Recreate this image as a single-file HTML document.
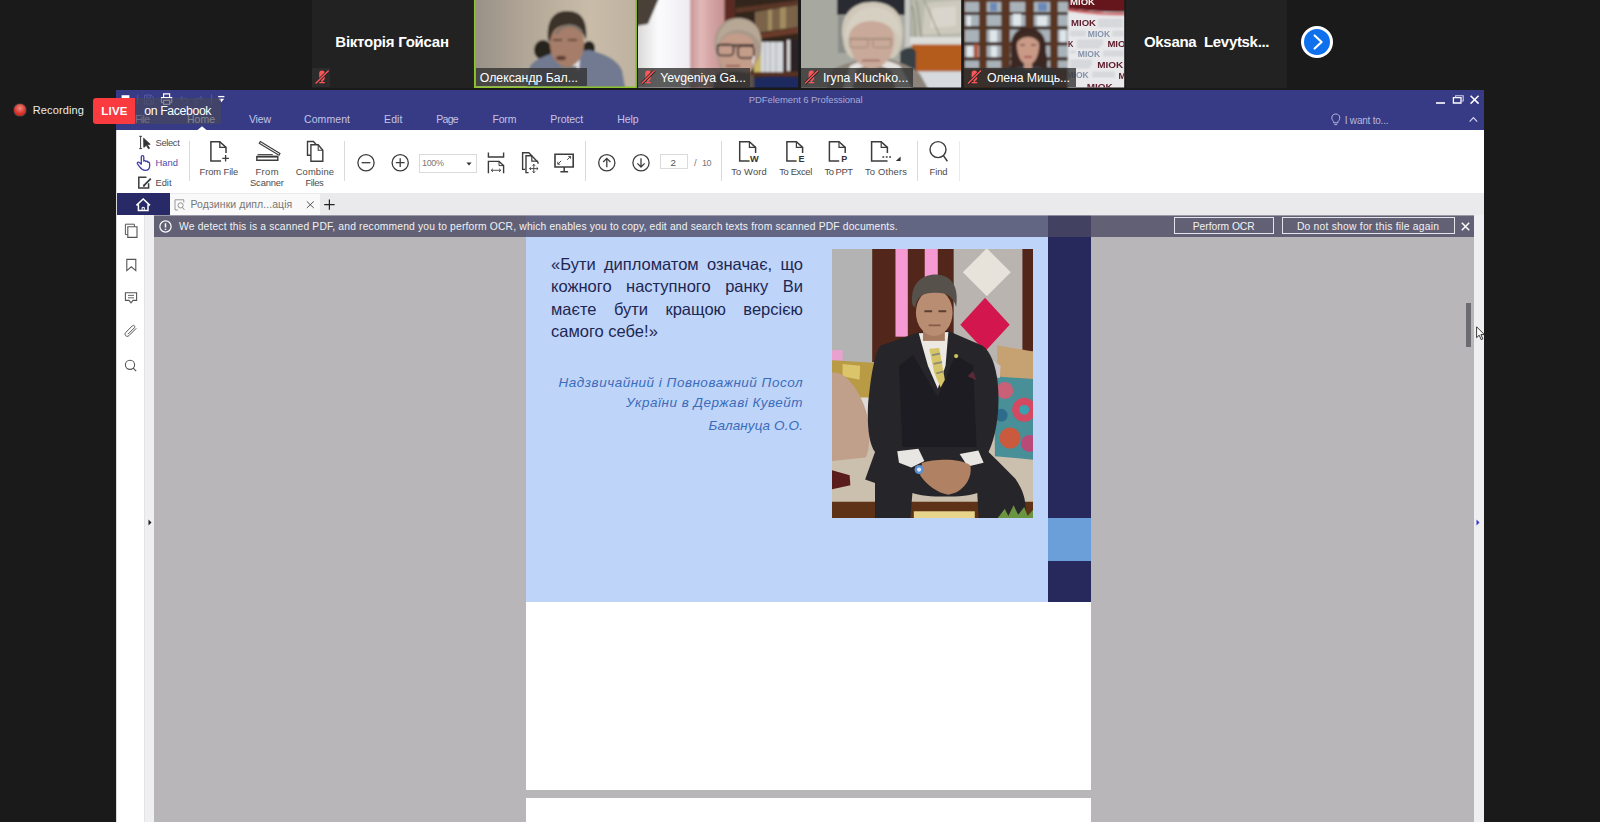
<!DOCTYPE html>
<html><head><meta charset="utf-8">
<style>
*{margin:0;padding:0;box-sizing:border-box}
html,body{width:1600px;height:822px;overflow:hidden;background:#1a1a1a;font-family:"Liberation Sans",sans-serif}
#stage{position:relative;width:1600px;height:822px;overflow:hidden;background:#1a1a1a}
.a{position:absolute}
.tx{position:absolute;white-space:nowrap;line-height:normal}
svg{position:absolute;overflow:visible}
.tile{position:absolute;top:0;height:88px;overflow:hidden;background:#222}
.lb{position:absolute;top:68px;height:19px;background:rgba(48,48,48,.78)}
.sep{position:absolute;top:141px;width:1px;height:40px;background:#dadada}
.q{position:absolute;left:25px;width:252px;font-size:16.5px;line-height:22px;color:#1d2753;text-align:justify;text-align-last:justify;white-space:nowrap}
.ql{text-align-last:left;text-align:left}
.it{position:absolute;left:0;width:277px;text-align:right;font-style:italic;font-size:13.5px;letter-spacing:.5px;line-height:16px;color:#3a6cb9;white-space:nowrap}
.ic{stroke:#444;stroke-width:1.3;fill:none}
</style></head><body><div id="stage">

<!-- GALLERY -->
<div class="tile" style="left:312px;width:161px"></div>
<div class="a" style="left:312px;top:68px;width:18px;height:19px;background:#2c2c2c"></div>
<div class="tile" id="t2" style="left:474px;width:163px;background:#141414"><!--T2--></div>
<div class="tile" id="t3" style="left:638px;width:160px;background:#141414"><!--T3--></div>
<div class="tile" id="t4" style="left:801px;width:160px;background:#141414"><!--T4--></div>
<div class="tile" id="t5" style="left:964px;width:160px;background:#141414"><!--T5--></div>
<div class="tile" style="left:1126px;width:161px"></div>
<!--TILES-START--><svg style="left:0;top:0" width="1600" height="88" viewBox="0 0 1600 88">
<defs>
 <filter id="tb2" x="-2%" y="-10%" width="104%" height="120%"><feGaussianBlur stdDeviation="0.35"/></filter>
 <filter id="tb" x="-2%" y="-10%" width="104%" height="120%"><feGaussianBlur stdDeviation="0.8"/></filter>
 <clipPath id="c2"><rect x="474" y="0" width="162.6" height="87.6"/></clipPath>
 <clipPath id="c3"><rect x="638" y="0" width="160.2" height="87.6"/></clipPath>
 <clipPath id="c4"><rect x="801" y="0" width="160.2" height="87.6"/></clipPath>
 <clipPath id="c5"><rect x="963.8" y="0" width="160.4" height="87.6"/></clipPath>
 <linearGradient id="w2" x1="0" x2="1" y1="0" y2="0"><stop offset="0" stop-color="#968f86"/><stop offset="0.35" stop-color="#b3a898"/><stop offset="0.7" stop-color="#c9bca9"/><stop offset="1" stop-color="#bdb09e"/></linearGradient>
 <linearGradient id="pk" x1="0" x2="1" y1="0" y2="0"><stop offset="0" stop-color="#c99696"/><stop offset="0.3" stop-color="#e2b9b8"/><stop offset="0.6" stop-color="#d3a3a3"/><stop offset="1" stop-color="#c58f90"/></linearGradient>
 <linearGradient id="wc" x1="0" x2="1" y1="0" y2="0"><stop offset="0" stop-color="#d8d6d4"/><stop offset="0.4" stop-color="#fbfbfd"/><stop offset="1" stop-color="#eeeaf0"/></linearGradient>
</defs>
<!-- tile 2 -->
<g clip-path="url(#c2)"><g filter="url(#tb)">
 <rect x="470" y="-4" width="172" height="96" fill="url(#w2)"/>
 <ellipse cx="543" cy="50" rx="9" ry="10" fill="#25221f"/>
 <ellipse cx="589" cy="48" rx="6" ry="7" fill="#25221f"/>
 <path d="M526,92 L530,66 C536,58 548,55 556,52 L590,50 C604,54 616,58 622,70 L626,92 Z" fill="#717a90"/>
 <path d="M556,52 L572,70 L582,52 Z" fill="#5f677c"/>
 <path d="M571,60 L580,56 L579,70 L573,70 Z" fill="#e8e8ee"/>
 <path d="M561,66 L577,66 L578,92 L558,92 Z" fill="#7d7d80"/>
 <ellipse cx="567" cy="44" rx="17" ry="23" fill="#a67d68"/>
 <path d="M548,40 C546,18 556,10 568,11 C582,11 588,22 586,40 C582,30 576,24 566,25 C556,26 552,30 550,42 Z" fill="#3b322c"/>
 <path d="M556,34 C562,24 574,22 582,32" stroke="#7d756c" stroke-width="2.5" fill="none"/>
 <ellipse cx="561" cy="58" rx="5" ry="2.2" fill="#5e3a30"/>
 <path d="M553,40 H562 M568,40 H577" stroke="#4a3428" stroke-width="1.6"/>
</g></g>
<!-- tile 3 -->
<g clip-path="url(#c3)"><g filter="url(#tb)">
 <rect x="636" y="-4" width="56" height="96" fill="url(#wc)"/>
 <path d="M636,-4 H660 L648,24 L636,26 Z" fill="#4a4038"/>
 <rect x="690" y="-4" width="36" height="96" fill="url(#pk)"/>
 <rect x="724.5" y="-4" width="11" height="96" fill="#5a2a20"/>
 <rect x="735" y="-4" width="70" height="96" fill="#33261f"/>
 <path d="M736,8 L800,0 L800,5 L736,13 Z" fill="#5a3426"/>
 <path d="M755,12 L798,5 L798,27 L755,33 Z" fill="#7a6448"/>
 <path d="M768,10 L772,9.5 V30 L768,30.5 Z M780,8 L786,7 V28 L780,29 Z" fill="#a08c60"/>
 <path d="M736,37 L800,27 L800,33 L736,42 Z" fill="#6b3a29"/>
 <rect x="760" y="42" width="23" height="30" fill="#d5d8dc"/>
 <path d="M765,42 V72 M770,42 V72 M776,42 V72" stroke="#9aa0a8" stroke-width="0.8"/>
 <rect x="754" y="50" width="7" height="22" fill="#c8b868"/>
 <rect x="783" y="40" width="8" height="31" fill="#3a2026"/><rect x="787" y="40" width="3" height="31" fill="#d8d4d4"/><rect x="791" y="40" width="9" height="31" fill="#2a2226"/>
 <rect x="748" y="72" width="54" height="4" fill="#5a3022"/>
 <path d="M748,80 C760,76 780,76 802,78 V92 H748 Z" fill="#1e2c5e"/>
 <path d="M715,50 C712,26 726,17 740,18 C756,19 764,32 761,52 C758,62 752,70 748,74 L722,74 Z" fill="#a8988a"/>
 <path d="M719,46 C722,34 736,30 748,36 C756,42 758,52 755,62 C752,72 744,78 736,78 C726,76 720,66 718,54 Z" fill="#c39c8a"/>
 <path d="M716,44 C718,26 730,18 742,19 C754,21 762,30 761,46 C756,34 748,30 738,30 C728,30 720,36 718,46 Z" fill="#b7a896"/>
 <path d="M717,45 H754 M736,45 V48" stroke="#2e2426" stroke-width="1.3" fill="none"/>
 <rect x="717.5" y="44.5" width="16" height="11" rx="4" fill="none" stroke="#2e2426" stroke-width="1.6"/>
 <rect x="738" y="46" width="16" height="12" rx="4" fill="none" stroke="#2e2426" stroke-width="1.6"/>
 <path d="M726,66 H740" stroke="#8a5048" stroke-width="1.6"/>
 <path d="M753,56 l1.5,0 l-1,8 l-1.2,0 z" fill="#f4f4f4"/>
 <path d="M716,74 C724,70 748,70 754,76 V92 H712 Z" fill="#5a5048"/>
</g></g>
<!-- tile 4 -->
<g clip-path="url(#c4)"><g filter="url(#tb)">
 <rect x="798" y="-4" width="168" height="96" fill="#a7a9a1"/>
 <rect x="837" y="-4" width="72" height="19" fill="#2a2c32"/>
 <rect x="838" y="16" width="9" height="37" fill="#8b8d89"/>
 <rect x="905" y="-4" width="5" height="52" fill="#c8c8c4"/>
 <rect x="912" y="-4" width="52" height="42" fill="#b9b9ad"/>
 <path d="M925,3 L961,0 V33 L922,35 Z" fill="#cdc9bd"/>
 <path d="M932,8 L956,6 V26 L930,28 Z" fill="#d9d5cc"/>
 <path d="M916,0 C920,14 918,30 924,44 M924,0 C930,12 934,24 940,36 M912,6 C916,20 914,34 916,48" stroke="#7a8468" stroke-width="0.9" fill="none"/>
 <rect x="910" y="37" width="54" height="8" fill="#dcdcd8"/>
 <rect x="912" y="44.5" width="52" height="27" fill="#b45b1f"/>
 <rect x="910" y="71.5" width="54" height="20" fill="#d6dade"/>
 <path d="M900,52 C906,46 914,46 916,52 V72 H900 Z" fill="#394045"/>
 <path d="M826,92 L832,70 C842,64 852,62 862,60 L892,60 C904,64 914,68 920,74 L930,92 Z" fill="#8c847a"/>
 <path d="M850,66 C862,58 888,58 900,66 L914,92 H842 Z" fill="#e4e2e0"/>
 <path d="M856,70 C866,64 884,64 892,72 L896,92 H852 Z" fill="#8a8078"/>
 <path d="M843,40 C838,14 854,1 874,2 C896,3 906,18 902,42 C900,52 896,58 892,58 L852,58 C846,54 844,48 843,40 Z" fill="#cfc8b9"/>
 <path d="M849,42 C848,26 858,20 872,21 C886,22 896,28 894,44 C892,58 884,68 872,69 C860,68 851,58 849,42 Z" fill="#c9a999"/>
 <path d="M845,36 C848,14 862,6 876,7 C892,9 902,20 900,38 C894,26 884,21 872,21 C860,21 850,26 847,40 Z" fill="#d6d0c2"/>
 <path d="M849,39 H892" stroke="#8a7868" stroke-width="0.9"/>
 <rect x="850" y="38.5" width="18" height="9" rx="2" fill="none" stroke="#9a8878" stroke-width="1"/>
 <rect x="873" y="38.5" width="18" height="9" rx="2" fill="none" stroke="#9a8878" stroke-width="1"/>
 <path d="M862,60.5 H880" stroke="#9a6058" stroke-width="1.5"/>
</g></g>
<!-- tile 5 -->
<g clip-path="url(#c5)"><g filter="url(#tb)">
 <rect x="960" y="-4" width="170" height="96" fill="#5a3421"/>
 <g fill="#a9b2b8">
  <rect x="965" y="2" width="14" height="66"/><rect x="986.5" y="2" width="15" height="66"/><rect x="1010" y="2" width="15.5" height="66"/><rect x="1034" y="2" width="16" height="66"/><rect x="1058" y="2" width="10" height="66"/>
 </g>
 <g fill="#3c2a22">
  <rect x="964" y="12" width="105" height="3"/><rect x="964" y="26" width="105" height="3.5"/><rect x="964" y="42" width="105" height="3.5"/><rect x="964" y="57" width="105" height="3.5"/>
 </g>
 <g fill="#5a3421"><rect x="979" y="-4" width="7.5" height="96"/><rect x="1001.5" y="-4" width="8.5" height="96"/><rect x="1025.5" y="-4" width="8.5" height="96"/><rect x="1050" y="-4" width="8" height="96"/></g>
 <g fill="#dfe6ea"><rect x="967" y="16" width="4" height="10"/><rect x="990" y="30" width="7" height="12"/><rect x="1013" y="14" width="8" height="12"/><rect x="1037" y="16" width="10" height="10"/><rect x="1060" y="30" width="6" height="12"/><rect x="967" y="46" width="6" height="11"/><rect x="991" y="46" width="6" height="11"/></g>
 <g fill="#6a88b8"><rect x="1038" y="3" width="9" height="8"/><rect x="990" y="3" width="7" height="8"/></g>
 <rect x="974" y="44" width="4" height="14" fill="#b4502a"/>
 <rect x="1068" y="-4" width="60" height="96" fill="#e9e9eb"/>
 <path d="M1068,-4 H1128 V12 C1108,13 1088,11 1068,9 Z" fill="#65171f"/>
 <path d="M1068,9 C1088,12 1108,14 1128,13 V15 C1108,16 1088,14 1068,11 Z" fill="#c83838"/>
 <g stroke="#9aa0a8" stroke-width="0.7"><path d="M1098,20 H1123 M1098,23 H1123 M1098,26 H1123 M1070,32 H1086 M1070,35 H1086 M1112,32 H1124 M1112,35 H1124 M1077,41 H1103 M1077,44 H1103 M1077,47 H1100 M1070,52 H1076 M1103,52 H1124 M1103,55 H1124 M1070,61 H1092 M1070,64 H1092 M1070,67 H1090 M1092,73 H1115 M1092,76 H1115"/></g>
 <path d="M994,92 L998,72 C1006,66 1016,64 1024,64 L1038,64 C1046,66 1054,68 1056,74 L1058,92 Z" fill="#3b3a3e"/>
 <path d="M1011,58 C1008,36 1016,28 1028,28 C1040,28 1047,36 1046,52 C1048,60 1048,66 1046,70 L1038,66 L1020,66 L1010,70 C1010,66 1011,62 1011,58 Z" fill="#3a2821"/>
 <path d="M1017,48 C1016,38 1022,34 1028,34 C1035,34 1040,38 1039,48 C1038,58 1034,64 1028,65 C1022,64 1018,58 1017,48 Z" fill="#c99a86"/>
 <path d="M1015,46 C1016,36 1022,32 1029,32 C1036,32 1041,36 1041,46 C1038,40 1034,37 1028,37 C1022,37 1018,40 1015,46 Z" fill="#3e2a22"/>
 <path d="M1024,57 H1032" stroke="#a04848" stroke-width="1.6"/>
 <path d="M1020,45 H1025 M1031,45 H1036" stroke="#4a3028" stroke-width="1.2"/>
 <rect x="1024" y="63" width="8" height="6" fill="#c09480"/>
</g></g>
 <g clip-path="url(#c5)"><g filter="url(#tb2)" font-family="Liberation Sans" font-weight="bold" lengthAdjust="spacingAndGlyphs">
  <text x="1070" y="4.5" font-size="9.5" fill="#f2f2f2" textLength="25" lengthAdjust="spacingAndGlyphs">MIOK</text>
  <text x="1071" y="26.3" font-size="8.8" fill="#5e1c2c" textLength="25" lengthAdjust="spacingAndGlyphs">MIOK</text>
  <text x="1087.8" y="36.6" font-size="8.4" fill="#8593ab" textLength="22.4" lengthAdjust="spacingAndGlyphs">MIOK</text>
  <text x="1068" y="47" font-size="8.8" fill="#5e1c2c" textLength="5.4" lengthAdjust="spacingAndGlyphs">K</text>
  <text x="1107.4" y="47" font-size="8.8" fill="#5e1c2c" textLength="25" lengthAdjust="spacingAndGlyphs">MIOK</text>
  <text x="1077.8" y="56.9" font-size="8.4" fill="#8593ab" textLength="22.4" lengthAdjust="spacingAndGlyphs">MIOK</text>
  <text x="1097.3" y="68.3" font-size="9" fill="#5e1c2c" textLength="26" lengthAdjust="spacingAndGlyphs">MIOK</text>
  <text x="1066.4" y="77.8" font-size="8.4" fill="#8593ab" textLength="22.4" lengthAdjust="spacingAndGlyphs">MIOK</text>
  <text x="1118.6" y="78.5" font-size="8.8" fill="#5e1c2c">M</text>
  <text x="1086.7" y="89.5" font-size="9" fill="#5e1c2c" textLength="26" lengthAdjust="spacingAndGlyphs">MIOK</text>
 </g></g>
</svg>
<!--TILES-END-->
<svg style="left:0;top:0" width="1600" height="90" viewBox="0 0 1600 90"><path d="M474.7,-2 V87.2 H636 V-2" fill="none" stroke="#8cc42c" stroke-width="1.6"/></svg>
<div class="lb" style="left:475.5px;width:111.5px;height:18.4px"></div>
<div class="lb" style="left:638px;width:112px"></div>
<div class="lb" style="left:801px;width:112px"></div>
<div class="lb" style="left:964px;width:112px"></div>
<!--MIC-START--><svg style="left:0;top:0" width="1600" height="90" viewBox="0 0 1600 90"><g transform="translate(315,67.6)"><path d="M7,3 C8.8,3 9.8,4.2 9.8,6 V10 C9.8,12.4 8.6,13.4 7,13.4 C5.4,13.4 4.2,12.4 4.2,10 V6 C4.2,4.2 5.2,3 7,3 Z" fill="#fb5759"/><path d="M7,13 V14.8 M4.2,15 H9.8" stroke="#fb5759" stroke-width="1.3"/><path d="M0.6,16 L13.6,3" stroke="#262626" stroke-width="3"/><path d="M0.6,16 L13.6,3" stroke="#fb5759" stroke-width="1.4"/></g><g transform="translate(641,67.6)"><path d="M7,3 C8.8,3 9.8,4.2 9.8,6 V10 C9.8,12.4 8.6,13.4 7,13.4 C5.4,13.4 4.2,12.4 4.2,10 V6 C4.2,4.2 5.2,3 7,3 Z" fill="#fb5759"/><path d="M7,13 V14.8 M4.2,15 H9.8" stroke="#fb5759" stroke-width="1.3"/><path d="M0.6,16 L13.6,3" stroke="#262626" stroke-width="3"/><path d="M0.6,16 L13.6,3" stroke="#fb5759" stroke-width="1.4"/></g><g transform="translate(804.4,67.6)"><path d="M7,3 C8.8,3 9.8,4.2 9.8,6 V10 C9.8,12.4 8.6,13.4 7,13.4 C5.4,13.4 4.2,12.4 4.2,10 V6 C4.2,4.2 5.2,3 7,3 Z" fill="#fb5759"/><path d="M7,13 V14.8 M4.2,15 H9.8" stroke="#fb5759" stroke-width="1.3"/><path d="M0.6,16 L13.6,3" stroke="#262626" stroke-width="3"/><path d="M0.6,16 L13.6,3" stroke="#fb5759" stroke-width="1.4"/></g><g transform="translate(967.4,67.6)"><path d="M7,3 C8.8,3 9.8,4.2 9.8,6 V10 C9.8,12.4 8.6,13.4 7,13.4 C5.4,13.4 4.2,12.4 4.2,10 V6 C4.2,4.2 5.2,3 7,3 Z" fill="#fb5759"/><path d="M7,13 V14.8 M4.2,15 H9.8" stroke="#fb5759" stroke-width="1.3"/><path d="M0.6,16 L13.6,3" stroke="#262626" stroke-width="3"/><path d="M0.6,16 L13.6,3" stroke="#fb5759" stroke-width="1.4"/></g></svg><!--MIC-END-->
<!-- next button -->
<div class="a" style="left:1301px;top:26px;width:32px;height:32px;border-radius:50%;background:#0e70ec;border:3px solid #fff"></div>
<svg style="left:1301px;top:26px" width="32" height="32" viewBox="0 0 32 32"><path d="M13.6,9.4 L20.6,16 L13.6,22.6" stroke="#fff" stroke-width="2.1" fill="none" stroke-linecap="round" stroke-linejoin="round"/></svg>

<!-- APP WINDOW -->
<div class="a" style="left:116px;top:90px;width:1368px;height:732px;background:#b8b6b9"></div>
<div class="a" style="left:116px;top:90px;width:1368px;height:40px;background:#373a85"></div>
<div class="a" style="left:116px;top:130px;width:1368px;height:64px;background:#fff"></div>
<div class="a" style="left:116px;top:193px;width:1368px;height:22px;background:#eae9eb"></div>
<div class="a" style="left:117px;top:193px;width:53px;height:22px;background:#272a66"></div>
<div class="a" style="left:170px;top:194px;width:150px;height:21px;background:#f9f9f9"></div>
<div class="a" style="left:117px;top:215px;width:27px;height:607px;background:#fff"></div><div class="a" style="left:144px;top:215px;width:1px;height:607px;background:#e3e3e5"></div>
<div class="a" style="left:145px;top:215px;width:9px;height:607px;background:#efeef0"></div>
<div class="a" style="left:1474px;top:215px;width:10px;height:607px;background:#efeef0"></div>
<div class="a" style="left:116px;top:130px;width:1px;height:692px;background:#d8d8dc"></div>
<!-- home indicator -->
<svg style="left:197px;top:126px" width="10" height="4" viewBox="0 0 10 4"><path d="M0.5,4 L5,0.3 L9.5,4 Z" fill="#fff"/></svg>
<!-- separators -->
<div class="sep" style="left:189px"></div><div class="sep" style="left:344px"></div><div class="sep" style="left:585px"></div>
<div class="sep" style="left:721px"></div><div class="sep" style="left:917px"></div><div class="sep" style="left:959px;background:#eaeaea"></div>
<!-- zoom combobox / page box -->
<div class="a" style="left:419px;top:154px;width:58px;height:19px;border:1px solid #dbdbdb;background:#fff"></div>
<svg style="left:466.4px;top:161.6px" width="6" height="4" viewBox="0 0 6 4"><path d="M0.4,0.4 L5.6,0.4 L3,3.4 Z" fill="#333"/></svg>
<div class="a" style="left:660px;top:154px;width:28px;height:15px;border:1px solid #dbdbdb;background:#fff"></div>
<!--ICONS-START--><svg style="left:0;top:0" width="1600" height="822" viewBox="0 0 1600 822">
<g fill="none" stroke="#3c3c3c" stroke-width="1.4" stroke-linejoin="miter">
 <!-- select -->
 <path d="M140.6,136.3 V148.6 M139.2,136.3 H142 M139.2,148.6 H142" stroke-width="1"/>
 <path d="M143.6,138.2 L150.2,144.3 L147.3,144.6 L149.6,148.2 L148.5,148.8 L146.3,145.3 L143.8,147.4 Z" fill="#333" stroke="#333" stroke-width="0.8"/>
 <!-- hand -->
 <path d="M141.3,164.2 V157 C141.3,155.2 143.8,155.2 143.8,157 V161.2 C143.8,160.3 145.8,160.4 145.9,161.6 C146.2,160.9 147.9,161.1 148,162.4 C148.4,161.9 149.6,162.3 149.6,163.6 V166.2 C149.6,168.7 147.8,170.3 145.3,170.3 C142.6,170.3 141.2,169 139.5,166.6 L137.5,163.8 C136.7,162.5 138.4,161.5 139.4,162.6 Z" stroke="#3f3fa6" stroke-width="1.3" stroke-linejoin="round"/>
 <!-- edit -->
 <path d="M146.5,177.2 H138.8 V188 H148.6 V183.2" stroke-width="1.5"/>
 <path d="M143.6,185.8 L150.8,178.6" stroke-width="1.8"/>
 <path d="M143.2,186.6 l1.8,-0.5 l-1.3,-1.3 z" fill="#333" stroke-width="0.5"/>
 <!-- from file -->
 <path d="M226,153 V147.4 L219.8,141.7 H210.9 V161 H221" stroke-width="1.5"/>
 <path d="M219.8,141.7 V147.4 H226" stroke-width="1.3"/>
 <path d="M225.6,155 V161.6 M222.3,158.3 H228.9" stroke-width="1.3"/>
 <!-- from scanner -->
 <path d="M260.3,141.5 L280,153.5 L279,155.3 L259.2,143.3 Z" stroke-width="1.1"/>
 <path d="M256.8,156.8 H277.8 V160.2 H256.8 Z" stroke-width="1.4"/>
 <path d="M256.8,156.4 H277.8" stroke-width="1.6"/>
 <path d="M257.6,154.6 H272.8" stroke-width="1"/>
 <!-- combine files -->
 <path d="M310.8,155.2 H307.5 V141.5 H313.4 L316,144.2" stroke-width="1.4"/>
 <path d="M310.9,144.7 H318.2 L322.8,150.2 V161.2 H310.9 Z" stroke-width="1.4"/>
 <path d="M318.2,144.7 V150.2 H322.8" stroke-width="1.1"/>
 <!-- zoom out/in -->
 <circle cx="366" cy="162.7" r="8.1" stroke-width="1.3"/><path d="M361.6,162.7 H370.4" stroke-width="1.3"/>
 <circle cx="400.2" cy="162.7" r="8.1" stroke-width="1.3"/><path d="M395.8,162.7 H404.6 M400.2,158.3 V167.1" stroke-width="1.3"/>
 <!-- fit width -->
 <path d="M488.4,152.4 V157 H503.6 V152.4" stroke-width="1.4"/>
 <path d="M488.4,173.2 V161.4 H499 L503.6,165.6 V173.2" stroke-width="1.4"/>
 <path d="M499,161.4 V165.6 H503.6" stroke-width="1"/>
 <path d="M491.4,170.3 H500.6 M493,168.7 L491.2,170.3 L493,171.9 M499,168.7 L500.8,170.3 L499,171.9" stroke-width="0.9"/>
 <!-- page move -->
 <path d="M525.2,169.4 H522.6 V152.7 H528.8 L538,162.2 V163.8" stroke-width="1.4"/>
 <path d="M528.6,172.6 H526 V155.8 H531.8" stroke-width="1.4"/>
 <path d="M531.8,155.2 V161.2 H537.6" stroke-width="1.2"/>
 <path d="M533.8,164.4 V172.8 M529.6,168.6 H538 M532.5,165.8 L533.8,164.3 L535.1,165.8 M532.5,171.4 L533.8,172.9 L535.1,171.4 M531,167.3 L529.5,168.6 L531,169.9 M536.6,167.3 L538.1,168.6 L536.6,169.9" stroke-width="0.9"/>
 <!-- fullscreen -->
 <path d="M555,154.2 H573.2 V167 H555 Z" stroke-width="1.6"/>
 <path d="M564.2,167 V171.4 M560.4,171.8 H568.1" stroke-width="1.5"/>
 <path d="M557.8,164.2 L561.2,160.8 M557.8,161.8 V164.2 H560.2 M567.2,159.8 L570.6,156.4 M568.2,156.4 H570.6 V158.8" stroke-width="0.9"/>
 <!-- up/down -->
 <circle cx="606.8" cy="162.7" r="8.1" stroke-width="1.3"/><path d="M606.8,167.2 V158.6 M603.2,162 L606.8,158.4 L610.4,162" stroke-width="1.3"/>
 <circle cx="641" cy="162.7" r="8.1" stroke-width="1.3"/><path d="M641,158.2 V166.8 M637.4,163.4 L641,167 L644.6,163.4" stroke-width="1.3"/>
 <!-- to word -->
 <path d="M755.6,153 V147.4 L749.4,141.7 H739.7 V161 H749.6" stroke-width="1.5"/><path d="M749.4,141.7 V147.4 H755.6" stroke-width="1.2"/>
 <!-- to excel -->
 <path d="M802.6,153 V147.4 L796.4,141.7 H786.9 V161 H796.6" stroke-width="1.5"/><path d="M796.4,141.7 V147.4 H802.6" stroke-width="1.2"/>
 <!-- to ppt -->
 <path d="M845.2,153 V147.4 L839,141.7 H829.4 V161 H839.2" stroke-width="1.5"/><path d="M839,141.7 V147.4 H845.2" stroke-width="1.2"/>
 <!-- to others -->
 <path d="M887.4,153 V147.4 L881.2,141.7 H871.6 V161 H887.5" stroke-width="1.5"/><path d="M881.2,141.7 V147.4 H887.4" stroke-width="1.2"/>
 <path d="M882.4,157 H884.2 M885.8,157 H887.6 M889.2,157 H891" stroke-width="1.6"/>
 <path d="M900.6,156.6 V161 H895.8 Z" fill="#333" stroke="none"/>
 <!-- find -->
 <circle cx="938" cy="149.6" r="8" stroke-width="1.4"/><path d="M943.4,155.6 L947.4,161.2" stroke-width="1.5"/>
 <!-- tab close & plus -->
 <path d="M306.8,201.4 L313.8,208 M313.8,201.4 L306.8,208" stroke="#555" stroke-width="1"/>
 <path d="M329.4,199.4 V209.8 M324.2,204.6 H334.6" stroke="#222" stroke-width="1.2"/>
 <!-- tab icon -->
 <path d="M183.8,202.4 V199.8 H175 V210 H178" stroke="#999" stroke-width="1"/>
 <circle cx="180.6" cy="205.4" r="2.6" stroke="#888" stroke-width="0.9"/><path d="M182.4,207.4 L184.4,209.8" stroke="#888" stroke-width="1"/>
 <!-- left panel icons -->
 <path d="M134.4,226.6 V224.2 H125.4 V234.6 H127.6" stroke="#555" stroke-width="1"/>
 <path d="M127.8,226.8 H137 V237.4 H127.8 Z" stroke="#555" stroke-width="1.1"/>
 <path d="M126.8,259.4 H135.8 V270.6 L131.3,266.8 L126.8,270.6 Z" stroke="#555" stroke-width="1.1"/>
 <path d="M125.4,292.8 H136.6 V300.4 H133 L131,302.8 L129,300.4 H125.4 Z" stroke="#555" stroke-width="1.1"/>
 <path d="M128,295.4 H134 M128,297.8 H134" stroke="#555" stroke-width="0.9"/>
 <path d="M128.2,334 L134.2,328 C135.8,326.4 133.8,324.4 132.2,326 L125.8,332.4 C123.6,334.8 126.6,337.8 129,335.6 L136,328.6" stroke="#555" stroke-width="1" stroke-linecap="round"/>
 <circle cx="130" cy="364.8" r="4.6" stroke="#555" stroke-width="1.1"/><path d="M133.2,368.2 L136.2,371.2" stroke="#555" stroke-width="1.2"/>
 <!-- home icon -->
 <path d="M136.4,205.4 L143.2,199 L150,205.4 M138.4,204.4 V210.6 H148 V204.4" stroke="#fff" stroke-width="1.5"/>
 <path d="M142.1,210.6 V207.4 H144.3 V210.6" stroke="#fff" stroke-width="1"/>
</g>
<!-- letters on convert icons -->
<g font-family="Liberation Sans" font-weight="bold" fill="#333">
 <text x="750" y="161.8" font-size="9.2">W</text>
 <text x="798.4" y="161.8" font-size="9">E</text>
 <text x="841.2" y="161.8" font-size="9">P</text>
</g>
<!-- title bar -->
<g fill="none">
 <rect x="121.6" y="95.2" width="7.8" height="9" fill="#fff"/>
 <path d="M137.7,94.5 V105 M211.5,94.5 V105" stroke="#55589c" stroke-width="1"/>
 <path d="M144.5,95 H151 L153.4,97.4 V104 H144.5 Z M146.8,95 V98 H150.6 V95 M146.6,104 V100.4 H151.4 V104" stroke="#5558a0" stroke-width="1"/>
 <path d="M163.6,97.6 V93.8 H169.6 V97.6 M161.5,102.6 V97.6 H171.7 V102.6 M163.6,100.4 H169.6 V104.4 H163.6 Z M163.6,102.6 H161.5 M169.6,102.6 H171.7" stroke="#ffffff" stroke-width="1.2"/>
 <path d="M182.4,96 L180.2,98.4 L182.4,100.8 M180.4,98.4 H185.2 C188.4,98.4 188.4,103 185.2,103" stroke="#5558a0" stroke-width="1"/>
 <path d="M200.2,96 L202.4,98.4 L200.2,100.8 M202.2,98.4 H197.4 C194.2,98.4 194.2,103 197.4,103" stroke="#5558a0" stroke-width="1"/>
 <path d="M218.2,96.6 H224.4" stroke="#fff" stroke-width="1.3"/><path d="M218.4,98.8 H224.2 L221.3,102.2 Z" fill="#fff"/>
 <!-- window controls -->
 <path d="M1436,103 H1445" stroke="#fff" stroke-width="1.6"/>
 <path d="M1453.4,97.6 H1461 V103 H1453.4 Z" stroke="#fff" stroke-width="1.3"/><path d="M1455.6,97.4 V95.8 H1463.2 V101 H1461.2" stroke="#c9cae4" stroke-width="1.1"/>
 <path d="M1470.6,95.8 L1478.6,103.6 M1478.6,95.8 L1470.6,103.6" stroke="#fff" stroke-width="1.5"/>
 <path d="M1469.6,121.6 L1473.4,117.6 L1477.2,121.6" stroke="#d5d6ee" stroke-width="1.2"/>
 <!-- bulb -->
 <path d="M1333.6,121.4 C1331,119.4 1331,114 1335.8,114 C1340.6,114 1340.6,119.4 1338,121.4 V122.8 H1333.6 Z M1334.4,124.6 H1337.2" stroke="#b6b8de" stroke-width="1"/>
</g>
</svg>
<!--ICONS-END-->

<!-- PAGES -->
<div class="a" style="left:526px;top:215px;width:565px;height:575px;background:#fff"></div>
<div class="a" style="left:526px;top:798px;width:565px;height:30px;background:#fff"></div>
<div class="a" id="slide" style="left:526px;top:215px;width:565px;height:387px;background:#bfd4f9;overflow:hidden">
  <div class="a" style="left:522.3px;top:0;width:43px;height:387px;background:#27285c"></div>
  <div class="a" style="left:522.3px;top:303px;width:43px;height:43px;background:#6a9fd9"></div>
  <div class="q" style="top:37.7px">«Бути дипломатом означає, що</div>
  <div class="q" style="top:60px">кожного наступного ранку Ви</div>
  <div class="q" style="top:82.5px">маєте бути кращою версією</div>
  <div class="q ql" style="top:105px">самого себе!»</div>
  <div class="it" style="top:160px">Надзвичайний і Повноважний Посол</div>
  <div class="it" style="top:180px">України в Державі Кувейт</div>
  <div class="it" style="top:202.6px;letter-spacing:.1px">Балануца О.О.</div>
  <svg style="left:306px;top:34px" width="201" height="269" viewBox="0 0 570 761" preserveAspectRatio="none">
   <defs><filter id="pb" x="-5%" y="-5%" width="110%" height="110%"><feGaussianBlur stdDeviation="2.2"/></filter>
   <clipPath id="pc"><rect x="0" y="0" width="570" height="761"/></clipPath></defs>
   <g clip-path="url(#pc)"><g filter="url(#pb)">
   <rect x="-10" y="-10" width="590" height="781" fill="#b9b4af"/>
   <rect x="-10" y="-10" width="126" height="340" fill="#b4b3b3"/>
   <rect x="114" y="-10" width="231" height="330" fill="#52271a"/>
   <rect x="180" y="-10" width="35" height="258" fill="#f59ad2"/>
   <rect x="263" y="-10" width="37" height="100" fill="#f59ad2"/>
   <rect x="540" y="-10" width="40" height="300" fill="#52271a"/>
   <rect x="0" y="286" width="30" height="30" fill="#e9a2cf"/>
   <polygon points="371,66 439,-2 507,66 439,134" fill="#e7e3db"/>
   <polygon points="364,214 434,138 504,214 434,290" fill="#d3164e"/>
   <!-- sofa back/seat -->
   <rect x="-10" y="440" width="590" height="300" fill="#cbbfad"/>
   <rect x="-10" y="715" width="590" height="60" fill="#5d3018"/>
   <!-- pillows left -->
   <path d="M0,315 L118,322 L112,420 L70,430 L0,380 Z" fill="#b99a45"/>
   <path d="M30,325 L80,330 L78,370 L30,360 Z" fill="#dcc46a"/>
   <rect x="78" y="420" width="40" height="60" fill="#dedbd6"/>
   <path d="M0,350 C40,345 80,400 100,470 C110,530 105,575 95,590 L0,600 Z" fill="#c0a08a"/>
   <!-- pillows right -->
   <path d="M468,272 L570,290 L570,372 L470,365 Z" fill="#c6a172"/>
   <path d="M460,360 L570,368 L570,596 L462,586 Z" fill="#4a8f98"/>
   <circle cx="545" cy="455" r="34" fill="#d44a62"/><circle cx="545" cy="455" r="14" fill="#3aa0b0"/>
   <circle cx="490" cy="400" r="24" fill="#c86078"/>
   <circle cx="505" cy="535" r="30" fill="#c95a3c"/><circle cx="560" cy="550" r="24" fill="#b84a78"/>
   <circle cx="480" cy="470" r="18" fill="#2f6c8c"/>
   <path d="M448,310 L478,330 L476,365 L452,360 Z" fill="#c9c2c6"/>
   <!-- book, paper, plant -->
   <path d="M0,626 L50,640 L52,668 L0,680 Z" fill="#5a1a1c"/>
   <!-- man body -->
   <path d="M244,236 L137,274 C118,300 108,380 102,444 C100,500 104,550 122,574 L94,652 L122,662 L122,765 L222,765 L228,690 C262,704 380,704 412,690 L416,765 L548,765 C552,722 548,690 520,650 L470,600 L444,574 C470,520 476,440 470,380 C465,330 450,290 427,274 L330,232 Z" fill="#27252a"/>
   <path d="M230,300 L300,420 L350,300 L400,330 L410,560 L200,560 L190,330 Z" fill="#1e1c20"/>
   <!-- shirt -->
   <path d="M246,238 L330,235 L322,330 L300,395 L272,330 Z" fill="#ece9e2"/>
   <path d="M276,282 L304,280 L320,370 L308,392 L290,350 Z" fill="#d6c468"/>
   <path d="M284,300 L306,296 M288,325 L312,320 M296,352 L317,346" stroke="#8b8b74" stroke-width="5"/>
   <!-- neck & head -->
   <rect x="258" y="215" width="62" height="45" fill="#a57a60"/>
   <ellipse cx="290" cy="180" rx="52" ry="66" fill="#b98d72"/>
   <path d="M228,158 C220,96 258,70 298,72 C344,76 360,112 352,164 C344,132 322,122 290,124 C258,124 240,134 236,166 Z" fill="#56514c"/>
   <path d="M262,176 L284,176 M302,176 L324,176" stroke="#5a4030" stroke-width="6"/>
   <path d="M274,216 L308,216" stroke="#8a5a4a" stroke-width="5"/>
   <!-- cuffs hands watch -->
   <path d="M185,572 L245,565 L262,600 L225,618 L190,605 Z" fill="#e8e6e2"/>
   <path d="M362,580 L415,570 L430,605 L385,615 Z" fill="#e8e6e2"/>
   <path d="M255,605 C290,595 360,590 392,612 C400,650 370,690 330,695 C300,690 270,670 250,640 Z" fill="#b08264"/>
   <circle cx="247" cy="624" r="13" fill="#5b8fd0"/><circle cx="247" cy="624" r="6" fill="#dfe8f4"/>
   <rect x="232" y="742" width="173" height="30" fill="#e6d58a"/>
   <path d="M470,761 L490,735 L500,755 L515,725 L528,752 L545,730 L555,755 L570,738 L570,761 Z" fill="#6a9440"/>
   <circle cx="352" cy="303" r="6" fill="#c9c05a"/>
   <path d="M385,360 L400,345 L410,372 Z" fill="#5a2a3a"/>
   </g></g></svg>
</div>
<!-- scroll thumb -->
<div class="a" style="left:1466px;top:303px;width:5px;height:44px;background:#6c6b70"></div>
<!-- OCR bar -->
<div class="a" style="left:154px;top:215px;width:1320px;height:1px;background:#c9c8d0;z-index:1;opacity:.55"></div>
<div class="a" style="left:154px;top:215px;width:1320px;height:22px;background:rgba(73,72,99,.79)"></div>
<div class="a" style="left:1174px;top:217px;width:100px;height:17px;border:1px solid #e4e4ea"></div>
<div class="a" style="left:1282px;top:217px;width:173px;height:17px;border:1px solid #e4e4ea"></div>
<svg style="left:1461px;top:222px" width="9" height="9" viewBox="0 0 9 9"><path d="M0.8,0.8 L8.2,8.2 M8.2,0.8 L0.8,8.2" stroke="#fff" stroke-width="1.5"/></svg>
<svg style="left:159px;top:219.5px" width="13" height="13" viewBox="0 0 13 13"><circle cx="6.5" cy="6.5" r="5.6" stroke="#fff" stroke-width="1.2" fill="none"/><path d="M6.5,3.2 L6.5,7.4 M6.5,8.8 L6.5,10" stroke="#fff" stroke-width="1.5"/></svg>

<!-- ZOOM OVERLAYS -->
<div class="a" style="left:14px;top:104px;width:12px;height:12px;border-radius:50%;background:radial-gradient(circle at 50% 35%,#f08a80 0,#d8342c 55%,#a8241e 100%);box-shadow:0 0 1px #fff"></div>
<div class="a" style="left:135px;top:98px;width:86px;height:26px;background:rgba(71,73,90,.68);border-radius:0 3px 3px 0;z-index:5"></div>
<div class="a" style="left:93px;top:98px;width:42px;height:26px;background:#f93a3e;border-radius:3px 0 0 3px;z-index:5"></div>
<!-- cursor -->
<svg style="left:1476px;top:326px" width="10" height="15" viewBox="0 0 10 15"><path d="M0.6,0.8 L0.6,11.6 L3.2,9.2 L5.2,13.6 L6.8,12.9 L4.9,8.6 L8.4,8.6 Z" fill="#fff" stroke="#222" stroke-width="0.9"/></svg>
<svg style="left:148px;top:519px" width="4" height="7" viewBox="0 0 4 7"><path d="M0.5,0.5 L3.5,3.5 L0.5,6.5 Z" fill="#222"/></svg>
<svg style="left:1476px;top:519px" width="4" height="7" viewBox="0 0 4 7"><path d="M0.5,0.5 L3.5,3.5 L0.5,6.5 Z" fill="#3a3ac8"/></svg>

<!-- TEXT -->
<div class="tx" id="m_file" style="left:135.00px;top:113.00px;font-size:10.5px;color:#c3c5e6;letter-spacing:-0.641px;">File</div>
<div class="tx" id="m_home" style="left:187.00px;top:113.00px;font-size:10.5px;color:#ffffff;letter-spacing:-0.005px;">Home</div>
<div class="tx" id="m_view" style="left:249.00px;top:113.00px;font-size:10.5px;color:#c3c5e6;letter-spacing:-0.193px;">View</div>
<div class="tx" id="m_comment" style="left:304.00px;top:113.00px;font-size:10.5px;color:#c3c5e6;letter-spacing:0.081px;">Comment</div>
<div class="tx" id="m_edit" style="left:384.00px;top:113.00px;font-size:10.5px;color:#c3c5e6;letter-spacing:0.135px;">Edit</div>
<div class="tx" id="m_page" style="left:436.25px;top:113.00px;font-size:10.5px;color:#c3c5e6;letter-spacing:-0.727px;">Page</div>
<div class="tx" id="m_form" style="left:492.50px;top:113.00px;font-size:10.5px;color:#c3c5e6;letter-spacing:-0.200px;">Form</div>
<div class="tx" id="m_protect" style="left:550.30px;top:113.00px;font-size:10.5px;color:#c3c5e6;letter-spacing:-0.078px;">Protect</div>
<div class="tx" id="m_help" style="left:617.20px;top:113.00px;font-size:10.5px;color:#c3c5e6;letter-spacing:-0.070px;">Help</div>
<div class="tx" id="title" style="left:748.75px;top:94.00px;font-size:9.5px;color:#a7aad6;letter-spacing:-0.079px;">PDFelement 6 Professional</div>
<div class="tx" id="iwant" style="left:1344.75px;top:115.00px;font-size:10px;color:#b6b8de;letter-spacing:-0.217px;">I want to...</div>
<div class="tx" id="r_select" style="left:155.50px;top:137.00px;font-size:9.4px;color:#4c4c4c;letter-spacing:-0.362px;">Select</div>
<div class="tx" id="r_hand" style="left:155.50px;top:157.00px;font-size:9.4px;color:#4c4cae;letter-spacing:0.026px;">Hand</div>
<div class="tx" id="r_edit" style="left:155.50px;top:177.00px;font-size:9.4px;color:#4c4c4c;letter-spacing:-0.052px;">Edit</div>
<div class="tx" id="r_fromfile" style="left:199.60px;top:166.00px;font-size:9.4px;color:#4c4c4c;letter-spacing:-0.112px;">From File</div>
<div class="tx" id="r_from" style="left:255.50px;top:166.00px;font-size:9.4px;color:#4c4c4c;letter-spacing:0.375px;">From</div>
<div class="tx" id="r_scanner" style="left:250.00px;top:177.00px;font-size:9.4px;color:#4c4c4c;letter-spacing:-0.154px;">Scanner</div>
<div class="tx" id="r_combine" style="left:295.70px;top:166.00px;font-size:9.4px;color:#4c4c4c;letter-spacing:0.128px;">Combine</div>
<div class="tx" id="r_files" style="left:305.50px;top:177.00px;font-size:9.4px;color:#4c4c4c;letter-spacing:-0.374px;">Files</div>
<div class="tx" id="r_zoom" style="left:422.00px;top:158.00px;font-size:9px;color:#777;letter-spacing:-0.344px;">100%</div>
<div class="tx" id="r_pg" style="left:670.60px;top:157.00px;font-size:9.8px;color:#555;letter-spacing:0.000px;">2</div>
<div class="tx" id="r_sl" style="left:694.00px;top:157.00px;font-size:9.5px;color:#777;letter-spacing:0.000px;">/</div>
<div class="tx" id="r_10" style="left:702.00px;top:158.00px;font-size:9px;color:#777;letter-spacing:-0.516px;">10</div>
<div class="tx" id="r_word" style="left:731.25px;top:166.00px;font-size:9.4px;color:#4c4c4c;letter-spacing:0.119px;">To Word</div>
<div class="tx" id="r_excel" style="left:779.20px;top:166.00px;font-size:9.4px;color:#4c4c4c;letter-spacing:-0.334px;">To Excel</div>
<div class="tx" id="r_ppt" style="left:824.40px;top:166.00px;font-size:9.4px;color:#4c4c4c;letter-spacing:-0.430px;">To PPT</div>
<div class="tx" id="r_others" style="left:865.00px;top:166.00px;font-size:9.4px;color:#4c4c4c;letter-spacing:0.157px;">To Others</div>
<div class="tx" id="r_find" style="left:929.50px;top:166.00px;font-size:9.4px;color:#4c4c4c;letter-spacing:-0.083px;">Find</div>
<div class="tx" id="tabname" style="left:190.50px;top:198.00px;font-size:10.5px;color:#777;letter-spacing:0.062px;">Родзинки дипл...ація</div>
<div class="tx" id="ocrtxt" style="left:179.00px;top:221.00px;font-size:10.3px;color:#f2f2f4;letter-spacing:0.170px;">We detect this is a scanned PDF, and recommend you to perform OCR, which enables you to copy, edit and search texts from scanned PDF documents.</div>
<div class="tx" id="ocrb1" style="left:1192.80px;top:221.00px;font-size:10.3px;color:#f2f2f4;letter-spacing:-0.047px;">Perform OCR</div>
<div class="tx" id="ocrb2" style="left:1296.90px;top:221.00px;font-size:10.3px;color:#f2f2f4;letter-spacing:0.234px;">Do not show for this file again</div>
<div class="tx" id="rec" style="left:32.70px;top:104.00px;font-size:11px;color:#ececec;letter-spacing:0.145px;">Recording</div>
<div class="tx" id="live" style="left:101.25px;top:105.00px;font-size:11.5px;color:#fff;letter-spacing:0.229px;font-weight:bold;z-index:6;">LIVE</div>
<div class="tx" id="onfb" style="left:144.30px;top:104.00px;font-size:12.3px;color:#fff;letter-spacing:-0.391px;z-index:6;">on Facebook</div>
<div class="tx" id="n1" style="left:335.30px;top:33.00px;font-size:15px;color:#fff;letter-spacing:-0.246px;font-weight:bold;">Вікторія Гойсан</div>
<div class="tx" id="n6" style="left:1144.00px;top:33.00px;font-size:15px;color:#fff;letter-spacing:-0.318px;font-weight:bold;">Oksana  Levytsk...</div>
<div class="tx" id="l2" style="left:479.80px;top:71.00px;font-size:12.3px;color:#fff;letter-spacing:-0.021px;">Олександр Бал...</div>
<div class="tx" id="l3" style="left:660.30px;top:71.00px;font-size:12.3px;color:#fff;letter-spacing:-0.048px;">Yevgeniya Ga...</div>
<div class="tx" id="l4" style="left:822.90px;top:71.00px;font-size:12.3px;color:#fff;letter-spacing:0.056px;">Iryna Kluchko...</div>
<div class="tx" id="l5" style="left:986.90px;top:71.00px;font-size:12.3px;color:#fff;letter-spacing:-0.106px;">Олена Мищь...</div>

</div></body></html>
